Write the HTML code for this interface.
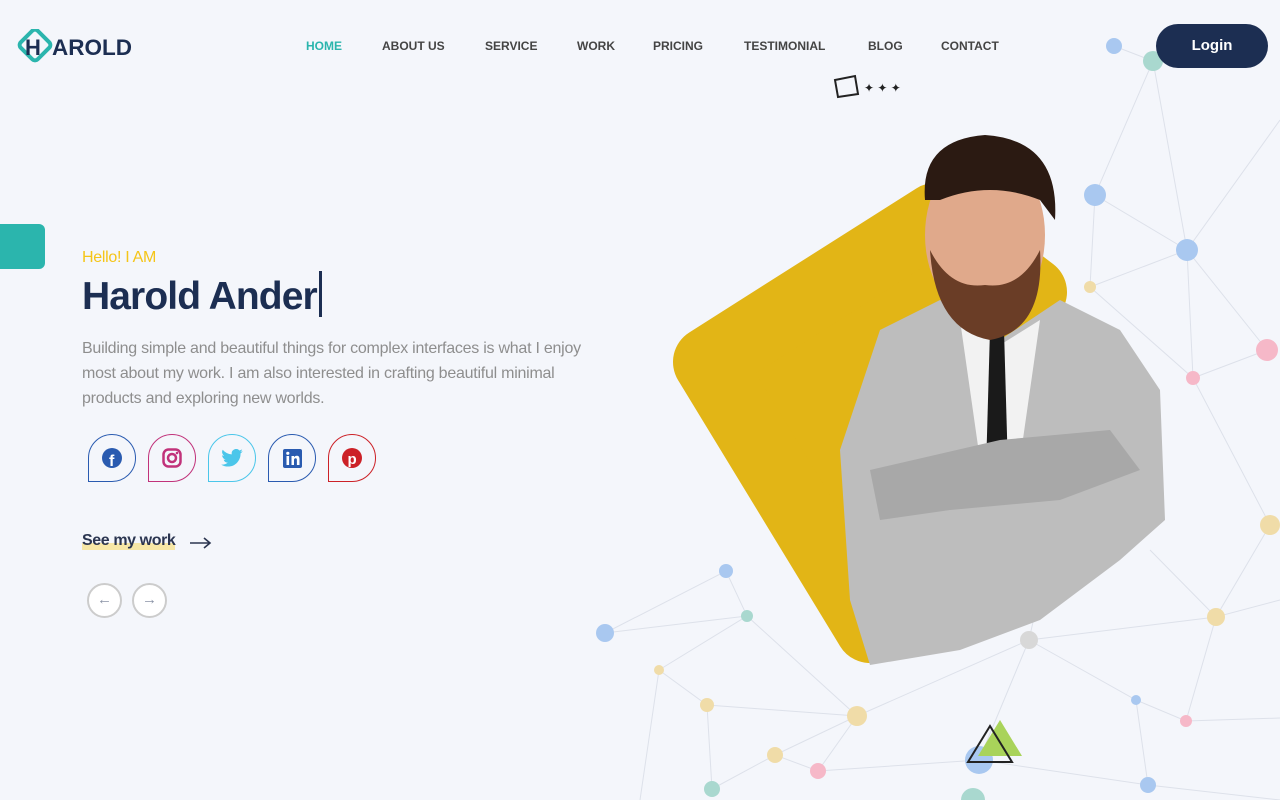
<!DOCTYPE html>
<html><head><meta charset="utf-8"><style>
*{margin:0;padding:0;box-sizing:border-box}
body{width:1280px;height:800px;background:#f4f6fb;font-family:"Liberation Sans",Roboto,sans-serif;position:relative;overflow:hidden}
.nav a{position:absolute;top:39px;font-size:12px;font-weight:bold;color:#444;text-decoration:none}
.login{position:absolute;left:1156px;top:24px;width:112px;height:44px;border-radius:22px;background:#1c2e52;color:#fff;font-weight:bold;font-size:15px;text-align:center;line-height:44px}
.tab{position:absolute;left:0;top:224px;width:45px;height:45px;background:#2bb5ad;border-radius:0 6px 6px 0}
.hello{position:absolute;left:82px;top:249px;color:#f5c518;font-size:16px;letter-spacing:-.3px}
h1{position:absolute;left:82px;top:271px;font-size:39px;color:#1c2e52;font-weight:bold;letter-spacing:-.9px}
h1 span{display:inline-block;width:3px;height:46px;background:#1c2e52;vertical-align:-8px;margin-left:2px}
p{position:absolute;left:82px;top:336px;width:528px;font-size:16px;line-height:25px;color:#8e8e8e;letter-spacing:-.25px}
.soc{position:absolute;top:434px;width:48px;height:48px;border:1px solid;border-radius:50% 50% 50% 0;display:flex;align-items:center;justify-content:center}
.see{position:absolute;left:82px;top:532px;font-size:16px;font-weight:bold;color:#2b3550;letter-spacing:-.4px;background:linear-gradient(transparent 62%,#f7e7a6 62%)}
.arr{position:absolute;top:583px;width:35px;height:35px;border:2px solid #ccc;border-radius:50%;background:#fff;color:#8a93a6;text-align:center;line-height:30px;font-size:15px}
</style></head><body>
<svg style="position:absolute;left:0;top:0" width="1280" height="800">
<g stroke="#dde1ea" stroke-width="1" fill="none">
<path d="M1114 46L1153 61L1095 195L1187 250L1193 378L1267 350L1187 250L1280 120M1153 61L1187 250M1095 195L1090 287L1193 378L1270 525L1216 617L1280 600M1090 287L1187 250M605 633L726 571L747 616L659 670L707 705L857 716L775 755L712 789M747 616L605 633M747 616L857 716L1029 640L1216 617M1029 640L1136 700L1186 721L1280 718M1136 700L1148 785L979 760L818 771L775 755M857 716L818 771M1029 640L979 760M707 705L712 789M659 670L640 800M1216 617L1186 721M1148 785L1280 800M1029 640L1060 500M1216 617L1150 550"/>
</g>
<g>
<circle cx="1114" cy="46" r="8" fill="#a9c8f0"/><circle cx="1153" cy="61" r="10" fill="#a9d8cf"/>
<circle cx="1095" cy="195" r="11" fill="#a9c8f0"/><circle cx="1187" cy="250" r="11" fill="#a9c8f0"/>
<circle cx="1090" cy="287" r="6" fill="#f0dca8"/><circle cx="1267" cy="350" r="11" fill="#f6b8c8"/>
<circle cx="1193" cy="378" r="7" fill="#f6b8c8"/><circle cx="1270" cy="525" r="10" fill="#f0dca8"/>
<circle cx="1216" cy="617" r="9" fill="#f0dca8"/><circle cx="1029" cy="640" r="9" fill="#d8d8d8"/>
<circle cx="1136" cy="700" r="5" fill="#a9c8f0"/><circle cx="1186" cy="721" r="6" fill="#f6b8c8"/>
<circle cx="1148" cy="785" r="8" fill="#a9c8f0"/><circle cx="979" cy="760" r="14" fill="#a9c8f0"/>
<circle cx="973" cy="800" r="12" fill="#a9d8cf"/><circle cx="857" cy="716" r="10" fill="#f0dca8"/>
<circle cx="818" cy="771" r="8" fill="#f6b8c8"/><circle cx="775" cy="755" r="8" fill="#f0dca8"/>
<circle cx="712" cy="789" r="8" fill="#a9d8cf"/><circle cx="707" cy="705" r="7" fill="#f0dca8"/>
<circle cx="659" cy="670" r="5" fill="#f0dca8"/><circle cx="605" cy="633" r="9" fill="#a9c8f0"/>
<circle cx="726" cy="571" r="7" fill="#a9c8f0"/><circle cx="747" cy="616" r="6" fill="#a9d8cf"/>
</g>
<polygon points="708,362 935,218 1032,292 870,628" fill="#e2b516" stroke="#e2b516" stroke-width="70" stroke-linejoin="round"/>
<path d="M880 330 L940 300 L1000 340 L1060 300 L1120 330 L1160 390 L1165 520 L1120 560 L1040 620 L960 650 L870 665 L850 600 L840 450 Z" fill="#bdbdbd"/>
<path d="M960 320 L1000 345 L1040 320 L1020 460 L1000 480 L980 460 Z" fill="#f2f2f2"/>
<path d="M990 330 L1004 330 L1008 470 L997 490 L986 470 Z" fill="#1a1a1a"/>
<path d="M870 470 L1000 440 L1110 430 L1140 470 L1060 500 L950 510 L880 520 Z" fill="#a8a8a8"/>
<ellipse cx="985" cy="235" rx="60" ry="85" fill="#e0a98b"/>
<path d="M930 250 Q935 330 990 340 Q1045 330 1040 250 Q1020 290 985 285 Q950 290 930 250Z" fill="#6a3d26"/>
<path d="M925 200 Q920 140 985 135 Q1060 140 1055 220 L1040 200 Q990 180 940 200 Z" fill="#2b1a12"/>
<path d="M835 80 L855 76 L858 94 L838 97 Z" fill="none" stroke="#222" stroke-width="2"/>
<text x="864" y="92" font-size="12" fill="#222">✦ ✦ ✦</text>
<polygon points="1000,720 1022,756 978,756" fill="#a9d35a"/>
<polygon points="990,726 1012,762 968,762" fill="none" stroke="#222" stroke-width="2"/>
</svg>
<svg style="position:absolute;left:17px;top:29px" width="120" height="36">
<rect x="6" y="4" width="24" height="24" rx="4" transform="rotate(45 18 16)" fill="none" stroke="#2bb5ad" stroke-width="4"/>
<text x="8" y="26" font-family="Liberation Sans" font-weight="bold" font-size="22" fill="#1c2e52">H</text>
<text x="35" y="26" font-family="Liberation Sans" font-weight="bold" font-size="22" textLength="80" lengthAdjust="spacingAndGlyphs" fill="#1c2e52">AROLD</text>
</svg>
<div class="nav"><a style="left:306px;color:#2bb5ad">HOME</a><a style="left:382px">ABOUT US</a><a style="left:485px">SERVICE</a><a style="left:577px">WORK</a><a style="left:653px">PRICING</a><a style="left:744px">TESTIMONIAL</a><a style="left:868px">BLOG</a><a style="left:941px">CONTACT</a></div>
<div class="login">Login</div>
<div class="tab"></div>
<div class="hello">Hello! I AM</div>
<h1>Harold Ander<span></span></h1>
<p>Building simple and beautiful things for complex interfaces is what I enjoy most about my work. I am also interested in crafting beautiful minimal products and exploring new worlds.</p>
<div class="soc" style="left:88px;border-color:#2a5bb0"><svg width="20" height="20"><circle cx="10" cy="10" r="10" fill="#2a5bb0"/><text x="7" y="18" font-size="16" font-weight="bold" fill="#fff">f</text></svg></div>
<div class="soc" style="left:148px;border-color:#c1327a"><svg width="20" height="20"><rect x="1.5" y="1.5" width="17" height="17" rx="5" fill="none" stroke="#c1327a" stroke-width="2.5"/><circle cx="10" cy="10" r="4" fill="none" stroke="#c1327a" stroke-width="2.5"/><circle cx="15" cy="5" r="1.3" fill="#c1327a"/></svg></div>
<div class="soc" style="left:208px;border-color:#4bc6ea"><svg width="22" height="18" viewBox="0 0 24 20"><path d="M24 2.4a10 10 0 0 1-2.8.8A5 5 0 0 0 23.3.4a10 10 0 0 1-3.1 1.2A4.9 4.9 0 0 0 11.8 6 14 14 0 0 1 1.7.9a4.9 4.9 0 0 0 1.5 6.6A4.9 4.9 0 0 1 1 6.9a4.9 4.9 0 0 0 3.9 4.8 5 5 0 0 1-2.2.1 4.9 4.9 0 0 0 4.6 3.4A9.9 9.9 0 0 1 0 17.3 14 14 0 0 0 7.5 19.5c9 0 14-7.5 14-14v-.6A10 10 0 0 0 24 2.4z" fill="#4bc6ea"/></svg></div>
<div class="soc" style="left:268px;border-color:#2a5bb0"><svg width="19" height="19"><rect width="19" height="19" rx="2" fill="#2a5bb0"/><rect x="3.5" y="7" width="2.6" height="9" fill="#fff"/><circle cx="4.8" cy="4.3" r="1.6" fill="#fff"/><path d="M8.5 7h2.5v1.3c.6-1 1.6-1.5 2.8-1.5 2 0 2.7 1.3 2.7 3.4V16h-2.6v-5c0-1-.3-1.8-1.3-1.8s-1.6.8-1.6 1.8v5H8.5z" fill="#fff"/></svg></div>
<div class="soc" style="left:328px;border-color:#cc2127"><svg width="20" height="20"><circle cx="10" cy="10" r="10" fill="#cc2127"/><text x="5.5" y="16" font-size="15" font-weight="bold" fill="#fff">p</text></svg></div>
<div class="see">See my work</div>
<svg style="position:absolute;left:190px;top:536px" width="22" height="14"><path d="M0 7H20M14 2L20 7L14 12" fill="none" stroke="#2b3550" stroke-width="1.6"/></svg>
<div class="arr" style="left:87px">←</div>
<div class="arr" style="left:132px">→</div>
</body></html>
